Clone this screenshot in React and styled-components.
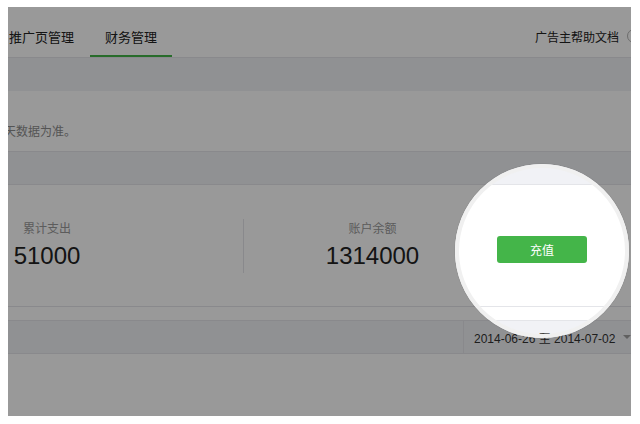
import React from 'react'
import styled, { createGlobalStyle } from 'styled-components'

const GlobalStyle = createGlobalStyle`
  html, body {
    margin: 0;
    padding: 0;
    background: #ffffff;
  }
  body {
    font-family: "Liberation Sans", "Noto Sans CJK SC", sans-serif;
    color: #222222;
  }
  * {
    box-sizing: border-box;
  }
`

const Page = styled.div`
  width: 640px;
  height: 424px;
  padding: 7px 9px 8px 8px;
`

const Frame = styled.div`
  position: relative;
  width: 623px;
  height: 409px;
  overflow: hidden;
  background: #ffffff;
`

const Header = styled.div`
  display: flex;
  justify-content: space-between;
  height: 51px;
  border-bottom: 1px solid #e4e5e9;
`

const Tabs = styled.div`
  display: flex;
  margin-left: -14px;
`

const Tab = styled.a`
  height: 50px;
  padding: 22px 15px 0;
  font-size: 13px;
  line-height: 18px;
  color: #222222;
  border-bottom: 2px solid ${p => (p.$active ? '#44b549' : 'transparent')};
  cursor: pointer;

  & + & {
    margin-left: 1px;
  }
`

const HelpLink = styled.a`
  display: flex;
  align-items: center;
  gap: 8px;
  padding-top: 8px;
  margin-right: -10px;
  font-size: 12px;
  color: #222222;
`

const HelpIcon = styled.span`
  width: 14px;
  height: 14px;
  border-radius: 50%;
  border: 1px solid #b5b5b5;
  color: #b5b5b5;
  font-size: 10px;
  line-height: 12px;
  text-align: center;
`

const Band = styled.div`
  height: ${p => p.$height}px;
  background: #f1f2f6;
  border-top: ${p => (p.$lined ? '1px solid #e4e5e9' : 'none')};
  border-bottom: ${p => (p.$lined ? '1px solid #e4e5e9' : 'none')};
`

const Notice = styled.p`
  margin: 0;
  height: 60px;
  padding-top: 32px;
  font-size: 12px;
  line-height: 18px;
  color: #8d8d8d;
  white-space: nowrap;
  span {
    margin-left: -28px;
  }
`

const Stats = styled.div`
  display: grid;
  grid-template-columns: 235px 1px 253px 1fr;
  align-items: center;
  height: 122px;
  border-bottom: 1px solid #e4e5e9;
`

const StatCell = styled.div`
  display: flex;
  justify-content: ${p => p.$justify || 'center'};
  padding-left: ${p => p.$inset || 0}px;
`

const Stat = styled.div`
  width: ${p => p.$width || 'auto'};
  text-align: center;
`

const StatLabel = styled.div`
  font-size: 12px;
  line-height: 18px;
  color: #999999;
`

const StatValue = styled.div`
  margin-top: 3px;
  font-size: 24px;
  line-height: 30px;
  color: #222222;
`

const Divider = styled.div`
  width: 1px;
  height: 54px;
  background: #e4e5e9;
`

const RechargeButton = styled.button`
  width: 90px;
  height: 27px;
  margin-top: 7px;
  border: none;
  border-radius: 3px;
  background: #44b549;
  color: #ffffff;
  font-family: "Noto Sans CJK SC", sans-serif;
  font-size: 12px;
  cursor: pointer;
`

const FilterBar = styled.div`
  display: flex;
  justify-content: flex-end;
  height: 34px;
  margin-top: 13px;
  background: #f1f2f6;
  border-top: 1px solid #e4e5e9;
  border-bottom: 1px solid #e4e5e9;
`

const DatePicker = styled.div`
  display: flex;
  align-items: center;
  flex-shrink: 0;
  width: 180px;
  margin-right: -12px;
  padding-left: 10px;
  border-left: 1px solid #e4e5e9;
  font-size: 12px;
  color: #333333;
  white-space: nowrap;
`

const Caret = styled.span`
  margin-left: 8px;
  border-left: 4px solid transparent;
  border-right: 4px solid transparent;
  border-top: 4px solid #a0a0a0;
`

const Spotlight = styled.div`
  position: absolute;
  left: 447px;
  top: 157px;
  width: 174px;
  height: 174px;
  border-radius: 50%;
  border: 4px solid #f0f0f0;
  box-shadow: 0 0 0 1px rgba(0, 0, 0, 0.04), 0 0 0 1200px rgba(0, 0, 0, 0.4);
  pointer-events: none;
`

export default function App() {
  return (
    <>
      <GlobalStyle />
      <Page>
        <Frame>
          <Header>
            <Tabs>
              <Tab>推广页管理</Tab>
              <Tab $active>财务管理</Tab>
            </Tabs>
            <HelpLink>
              广告主帮助文档
              <HelpIcon>?</HelpIcon>
            </HelpLink>
          </Header>
          <Band $height={33} />
          <Notice>
            <span>以昨天数据为准。</span>
          </Notice>
          <Band $height={34} $lined />
          <Stats>
            <StatCell $justify="flex-start">
              <Stat $width="78px">
                <StatLabel>累计支出</StatLabel>
                <StatValue>51000</StatValue>
              </Stat>
            </StatCell>
            <Divider />
            <StatCell $inset={4}>
              <Stat>
                <StatLabel>账户余额</StatLabel>
                <StatValue>1314000</StatValue>
              </Stat>
            </StatCell>
            <StatCell $justify="flex-start">
              <RechargeButton>充值</RechargeButton>
            </StatCell>
          </Stats>
          <FilterBar>
            <DatePicker>
              2014-06-26 至 2014-07-02
              <Caret />
            </DatePicker>
          </FilterBar>
          <Spotlight />
        </Frame>
      </Page>
    </>
  )
}
